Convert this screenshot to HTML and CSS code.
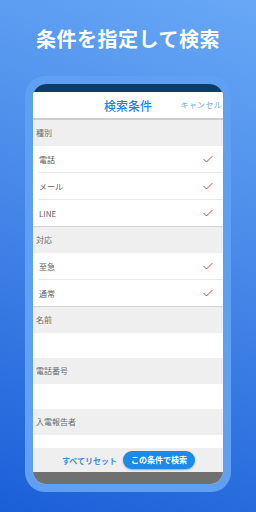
FILE: index.html
```html
<!DOCTYPE html>
<html lang="ja">
<head>
  <meta charset="UTF-8" />
  <meta name="viewport" content="width=device-width, initial-scale=1.0" />
  <title>条件を指定して検索</title>
  <link rel="stylesheet" href="styles.css">
</head>
<body>
  <div class="page">
    <h1 class="headline">条件を指定して検索</h1>

    <div class="phone">
      <div class="screen">
        <div class="status"></div>
        <div class="nav">
          <span class="nav-title">検索条件</span>
          <span class="nav-cancel">キャンセル</span>
        </div>

        <div class="list">
          <div class="section">種別</div>
          <div class="row">電話<svg class="check" viewBox="0 0 10 8"><path d="M0.5 4 L3.5 7 L9.5 1" /></svg></div>
          <div class="row">メール<svg class="check" viewBox="0 0 10 8"><path d="M0.5 4 L3.5 7 L9.5 1" /></svg></div>
          <div class="row last">LINE<svg class="check" viewBox="0 0 10 8"><path d="M0.5 4 L3.5 7 L9.5 1" /></svg></div>

          <div class="section">対応</div>
          <div class="row">至急<svg class="check" viewBox="0 0 10 8"><path d="M0.5 4 L3.5 7 L9.5 1" /></svg></div>
          <div class="row last">通常<svg class="check" viewBox="0 0 10 8"><path d="M0.5 4 L3.5 7 L9.5 1" /></svg></div>

          <div class="section">名前</div>
          <div class="input"></div>
          <div class="section">電話番号</div>
          <div class="input"></div>
          <div class="section">入電報告者</div>
          <div class="input short"></div>
        </div>

        <div class="actions">
          <span class="reset">すべてリセット</span>
          <span class="search">この条件で検索</span>
        </div>
        <div class="bottom"></div>
      </div>
    </div>
  </div>
</body>
</html>
```

FILE: styles.css
```css
html, body {
  margin: 0;
  padding: 0;
}
body {
  width: 256px;
  height: 512px;
  overflow: hidden;
  font-family: "Noto Sans CJK JP", "Noto Sans", sans-serif;
}
.page {
  width: 256px;
  height: 512px;
  background: linear-gradient(200deg, #68a8f6 0%, #4b8cea 40%, #2f72e0 75%, #1b5fd8 100%);
  display: flex;
  flex-direction: column;
  align-items: center;
}
.headline {
  margin: 24px 0 0;
  height: 30px;
  line-height: 30px;
  font-size: 20px;
  font-weight: 700;
  color: #fff;
  letter-spacing: 0.5px;
}
.phone {
  margin-top: 22px;
  width: 190px;
  padding: 8px;
  background: #5fa0f2;
  border-radius: 20px;
}
.screen {
  height: 400px;
  border-radius: 13px;
  overflow: hidden;
  background: #fff;
  display: flex;
  flex-direction: column;
}
.status {
  height: 8px;
  background: #0b3d6b;
}
.nav {
  height: 26px;
  flex-shrink: 0;
  display: flex;
  align-items: center;
  justify-content: center;
  position: relative;
  background: #fff;
  border-bottom: 2px solid #cfcfcf;
}
.nav-title {
  font-size: 12px;
  font-weight: 500;
  color: #1b87e6;
}
.nav-cancel {
  position: absolute;
  right: 1px;
  top: 7px;
  font-size: 8px;
  color: #79a9e6;
  letter-spacing: 0.3px;
}
.list {
  height: 328px;
  overflow: hidden;
}
.section {
  height: 26px;
  line-height: 26px;
  padding-left: 3px;
  background: #efefef;
  font-size: 8px;
  color: #6a6a6a;
}
.row {
  height: 26px;
  margin-left: 6px;
  padding-right: 10px;
  display: flex;
  align-items: center;
  justify-content: space-between;
  border-bottom: 1px solid #e8e8e8;
  font-size: 8px;
  color: #606060;
}
.row.last {
  margin-left: 0;
  padding-left: 6px;
  border-bottom: 1px solid #d4d4d4;
}
.check {
  width: 10px;
  height: 8px;
}
.check path {
  fill: none;
  stroke: #ee2b2b;
  stroke-width: 0.9;
}
.input {
  height: 25px;
  background: #fff;
}
.input.short {
  height: 13px;
}
.actions {
  height: 24px;
  flex-shrink: 0;
  background: #efefef;
  display: flex;
  align-items: center;
  justify-content: flex-end;
  gap: 6px;
  padding-right: 28px;
}
.reset {
  font-size: 8px;
  font-weight: 700;
  color: #3a8ee6;
}
.search {
  height: 18px;
  line-height: 18px;
  padding: 0 8px;
  border-radius: 9px;
  background: #1b8ae8;
  color: #fff;
  font-size: 8px;
  font-weight: 700;
  box-shadow: 0 1px 2px rgba(0,0,0,0.3);
}
.bottom {
  flex: 1;
  background: #707070;
}
```
